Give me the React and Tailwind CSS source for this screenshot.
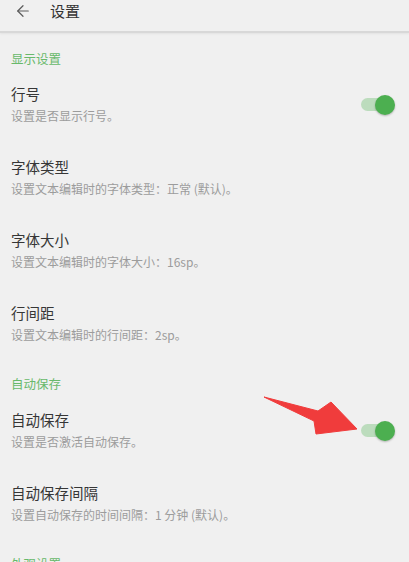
import React from 'react';
import { ArrowLeft } from 'lucide-react';

const font = { fontFamily: '"Noto Sans CJK SC", "Noto Sans", sans-serif' };

const Toggle = ({ on = true }) => (
  <div className="relative w-[34px] h-[20px] flex items-center">
    <div className={`w-[28px] h-[13px] rounded-full ${on ? 'bg-[#bcdcbd]' : 'bg-[#cfcfcf]'}`} />
    <div
      className={`absolute top-0 w-[20px] h-[20px] rounded-full shadow-[0_1px_2px_rgba(0,0,0,0.25)] ${
        on ? 'right-0 bg-[#4caf50]' : 'left-0 bg-[#fafafa]'
      }`}
    />
  </div>
);

const SectionHeader = ({ title, className = '' }) => (
  <div className={`pl-[11px] text-[12.5px] leading-[18px] text-[#68b96b] ${className}`}>{title}</div>
);

const SettingItem = ({ title, desc, toggle }) => (
  <div className="h-[73px] pt-[14px] pl-[11px] pr-[14px]">
    <div className="flex items-center justify-between">
      <div className="flex flex-col gap-[3px]">
        <div className="text-[14.5px] leading-[20px] text-[#363636]">{title}</div>
        <div className="text-[12px] leading-[18px] text-[#9c9c9c]">{desc}</div>
      </div>
      {toggle && <Toggle />}
    </div>
  </div>
);

const RedArrow = () => (
  <svg className="absolute left-0 top-0 pointer-events-none" width="409" height="562">
    <polygon
      points="264,397 318,411 331,402 357,429 316,434 314,421"
      fill="#f03c3c"
      stroke="#f03c3c"
      strokeWidth="1"
      strokeLinejoin="round"
    />
  </svg>
);

export default function App() {
  return (
    <div className="relative w-[409px] h-[562px] overflow-hidden bg-[#f0f0f0]" style={font}>
      <div className="h-[33px] pb-[9px] flex items-center border-b-2 border-[#d8d8d8] shadow-[0_1px_2px_rgba(0,0,0,0.06)]">
        <ArrowLeft className="ml-[14px] text-[#5a5a5a]" size={18} strokeWidth={1.6} />
        <span className="ml-[18px] text-[15px] text-[#333]">设置</span>
      </div>

      <SectionHeader title="显示设置" className="mt-[17px] mb-[2px]" />
      <SettingItem title="行号" desc="设置是否显示行号。" toggle />
      <SettingItem title="字体类型" desc="设置文本编辑时的字体类型：正常 (默认)。" />
      <SettingItem title="字体大小" desc="设置文本编辑时的字体大小：16sp。" />
      <SettingItem title="行间距" desc="设置文本编辑时的行间距：2sp。" />

      <SectionHeader title="自动保存" className="mt-[13px] mb-[3px]" />
      <SettingItem title="自动保存" desc="设置是否激活自动保存。" toggle />
      <SettingItem title="自动保存间隔" desc="设置自动保存的时间间隔：1 分钟 (默认)。" />

      <SectionHeader title="外观设置" className="mt-[13px]" />

      <RedArrow />
    </div>
  );
}
